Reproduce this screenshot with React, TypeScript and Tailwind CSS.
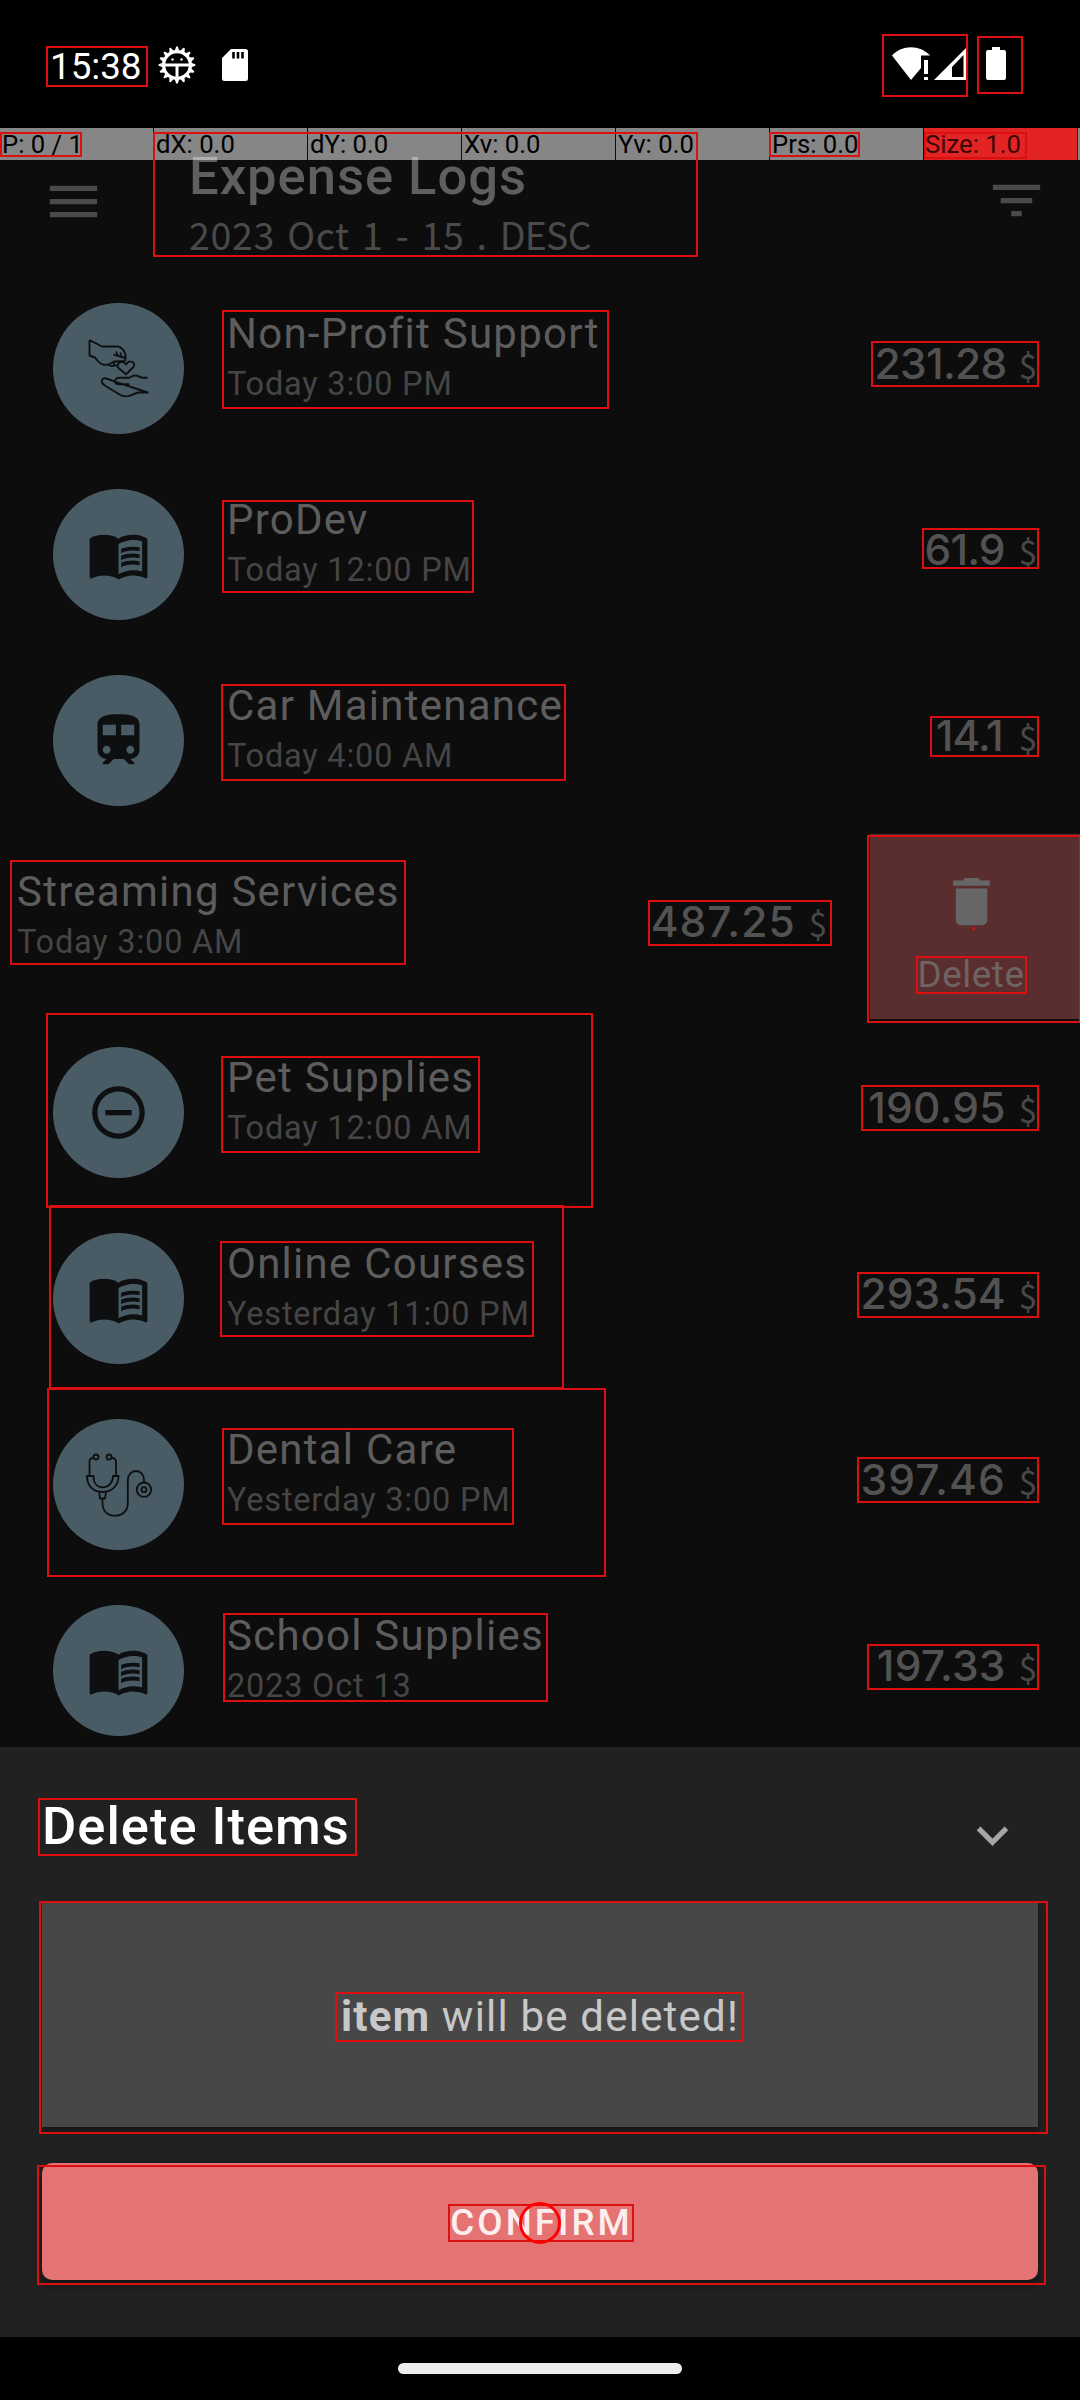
import type { ReactNode } from "react";
import {
  MdMenu,
  MdFilterList,
  MdMenuBook,
  MdRemoveCircleOutline,
  MdDelete,
  MdExpandMore,
} from "react-icons/md";

function DonateIcon() {
  return (
    <svg className="size-[131px]" viewBox="53 303 131 131" fill="none" stroke="currentColor" strokeWidth="1.9" strokeLinejoin="round">
      <path d="M89.500 340L102 346.500H118C121 346.500 125.500 352 125.500 355V359C125.500 362 122 361.500 119 362.500M89.500 340V355.500L95 357.500C98 361 99 364 104 364.800C109 365.500 111 363 114 361.500L125 361" />
      <path d="M125.500 358L113.300 354.700M116 351.500L117.500 355M120.700 352.500V356M108 364.500L111 366L117 365.500M113.500 362L114.500 366" />
      <path d="M126 374.300L118.500 368C115.500 364.500 121.500 358.500 126 364.500C129.500 358.500 136.500 362.500 133.500 367Z" />
      <path d="M147.700 377.700H141.700C139 376.500 138 375.500 135 375.500S131 377.700 129 377.700H119C116.500 377.700 115 379.500 115 381.500S117 384.300 119.300 384.300H129.300M115 381.700L106.500 378.500C103 377.500 101 380 102 382.500C102.800 384.300 104 384.800 106 386.300L119.500 394.500C123 396.800 126 397 130 395.700L138 392.500H147.700Z" />
    </svg>
  );
}

function StethoscopeIcon() {
  return (
    <svg className="size-[131px]" viewBox="53 1419 131 131" fill="none" stroke="currentColor" strokeWidth="1.8">
      <circle cx="96" cy="1457" r="2.500" />
      <circle cx="109" cy="1457" r="2.500" />
      <path d="M93.500 1457.500c-3 .5-4 2-4 4.500v14M111.500 1457.500c3 .5 4.500 2 4.500 4.500v14" />
      <path d="M87 1476h6.500c0 7 3.500 11.300 9 11.300s10.500-4.300 10.500-11.300h5.500c0 9-6 16-16 16s-15.500-7-15.500-16z" />
      <path d="M99.200 1492l.8 6.500h5l1-6.500M102.500 1498.500v4.500c0 8 5 12.700 12.200 12.700 8 0 13.100-5 13.100-12.700v-23c0-5 3.500-9 8.200-9s8 4 8 9v2.500" />
      <circle cx="144" cy="1489.700" r="7.200" />
      <circle cx="144" cy="1489.700" r="2.500" />
    </svg>
  );
}

function TrainIcon() {
  return (
    <svg className="size-[63px]" viewBox="0 0 24 24" fill="currentColor">
      <path d="M12 2c-4 0-8 .5-8 4v9.500C4 17.430 5.570 19 7.500 19L6 20.500v.5h2.230l2-2H14l2 2h2v-.5L16.500 19c1.930 0 3.500-1.570 3.500-3.500V6c0-3.500-3.580-4-8-4zM7.500 17c-.83 0-1.500-.67-1.500-1.500S6.670 14 7.500 14s1.500.67 1.500 1.500S8.330 17 7.500 17zm3.500-7H6V6h5v4zm2 0V6h5v4h-5zm3.500 7c-.83 0-1.500-.67-1.500-1.500s.67-1.500 1.500-1.500 1.500.67 1.500 1.500-.67 1.500-1.500 1.500z" />
    </svg>
  );
}

function GearIcon() {
  const teeth = Array.from({ length: 16 }, (_, i) => i * 22.5);
  return (
    <svg className="size-[38px]" viewBox="0 0 38 38" fill="none" stroke="white">
      {teeth.map((a) => (
        <path key={a} d="M16.500 5.500L18.200.6h1.600l1.700 4.900z" fill="white" stroke="none" transform={`rotate(${a} 19 19)`} />
      ))}
      <circle cx="19" cy="19" r="13.400" strokeWidth="3.200" />
      <path d="M6 19h26M19 20v12" strokeWidth="3" />
      <circle cx="14.500" cy="13.500" r="1.200" fill="white" stroke="none" />
      <circle cx="23.500" cy="13.500" r="1.200" fill="white" stroke="none" />
    </svg>
  );
}

function StatusBar() {
  return (
    <div className="flex h-[128px] items-start bg-black pt-[46px] text-white">
      <span className="ml-[50px] w-[108px] text-[36.750px] leading-[41px]">15:38</span>
      <GearIcon />
      <svg className="ml-[26px] mt-[3px] h-8 w-[26px]" viewBox="0 0 26 32">
        <path d="M9 0h14.500a2.500 2.500 0 0 1 2.500 2.500v27a2.500 2.500 0 0 1-2.500 2.500H2.500A2.500 2.500 0 0 1 0 29.500V9z" fill="white" />
        <path d="M11.500 3v6.500M16 3v6.500M20.500 3v6.500" stroke="black" strokeWidth="2.600" />
      </svg>
      <svg className="ml-[644px] mt-px h-[33px] w-[38px]" viewBox="0 0 38 33" fill="white">
        <path d="M0 8.500C10-2.500 28-2.500 38 8.500H29V21L19 33z" />
        <path d="M32 13h4v14h-4zM32 30h4v3h-4z" />
      </svg>
      <svg className="ml-1 mt-px h-[33px] w-8" viewBox="0 0 32 33">
        <path d="M32 1v32H0z" fill="white" />
        <path d="M29.500 8v22H18V20z" fill="black" />
      </svg>
      <svg className="ml-5 mt-px h-[33px] w-5" viewBox="0 0 20 33" fill="white">
        <path d="M6 0h8v3h4a2 2 0 0 1 2 2v26a2 2 0 0 1-2 2H2a2 2 0 0 1-2-2V5a2 2 0 0 1 2-2h4z" />
      </svg>
    </div>
  );
}

type Expense = {
  title: string;
  date: string;
  amount: string;
  icon: ReactNode;
  spacing: string;
};

const book = <MdMenuBook className="size-[63px]" />;

const before: Expense[] = [
  { title: "Non-Profit Support", date: "Today 3:00 PM", amount: "231.28", icon: <DonateIcon />, spacing: "tracking-[-0.7px] mr-[-1px]" },
  { title: "ProDev", date: "Today 12:00 PM", amount: "61.9", icon: book, spacing: "tracking-[-0.9px] mr-px" },
  { title: "Car Maintenance", date: "Today 4:00 AM", amount: "14.1", icon: <TrainIcon />, spacing: "tracking-[-1px] mr-[3px]" },
];

const after: Expense[] = [
  { title: "Pet Supplies", date: "Today 12:00 AM", amount: "190.95", icon: <MdRemoveCircleOutline className="size-[63px]" />, spacing: "tracking-[0.2px]" },
  { title: "Online Courses", date: "Yesterday 11:00 PM", amount: "293.54", icon: book, spacing: "tracking-[0px]" },
  { title: "Dental Care", date: "Yesterday 3:00 PM", amount: "397.46", icon: <StethoscopeIcon />, spacing: "tracking-[1px]" },
  { title: "School Supplies", date: "2023 Oct 13", amount: "197.33", icon: book, spacing: "tracking-[0.2px]" },
];

function Labels({ title, date }: { title: string; date: string }) {
  return (
    <div className="flex-1 pt-[33px] whitespace-nowrap">
      <div className="text-[42px] leading-[50px] tracking-[1.25px] text-[#5d5d5d]">{title}</div>
      <div className="mt-[3px] text-[32.500px] leading-[44px] tracking-[0.8px] text-[#454545]">{date}</div>
    </div>
  );
}

function Amount({ value, spacing }: { value: string; spacing: string }) {
  return (
    <div className="flex items-baseline pt-[62px] font-['Inter',sans-serif] leading-[52px] text-[#525252]">
      <span className={`text-[42.500px] font-medium ${spacing}`}>{value}</span>
      <span className="ml-[13px] font-['Noto_Sans_CJK_SC',sans-serif] text-[33px] leading-[40px] text-[#484848]">$</span>
    </div>
  );
}

function Row({ item }: { item: Expense }) {
  return (
    <div className="flex h-[186px] shrink-0 items-start pl-[53px] pr-[43px]">
      <div className="mr-[43px] mt-[27px] flex size-[131px] items-center justify-center rounded-full bg-[#495c65] text-[#0d0f10]">
        {item.icon}
      </div>
      <Labels title={item.title} date={item.date} />
      <Amount value={item.amount} spacing={item.spacing} />
    </div>
  );
}

const boxes: [number, number, number, number][] = [
  [46, 46, 148, 87],
  [882, 34, 968, 97],
  [977, 36, 1023, 94],
  [0, 132, 82, 157],
  [153, 132, 698, 257],
  [769, 132, 860, 157],
  [924, 132, 1027, 159],
  [222, 310, 609, 409],
  [222, 500, 474, 593],
  [221, 684, 566, 781],
  [10, 860, 406, 965],
  [648, 900, 832, 946],
  [867, 835, 1081, 1023],
  [916, 956, 1027, 994],
  [46, 1013, 593, 1208],
  [221, 1056, 480, 1153],
  [49, 1205, 564, 1389],
  [220, 1241, 534, 1337],
  [47, 1388, 606, 1577],
  [222, 1428, 514, 1525],
  [223, 1613, 548, 1702],
  [871, 341, 1039, 387],
  [922, 528, 1039, 569],
  [930, 716, 1039, 757],
  [861, 1085, 1039, 1131],
  [857, 1272, 1039, 1318],
  [857, 1457, 1039, 1503],
  [867, 1644, 1039, 1690],
  [38, 1798, 357, 1856],
  [39, 1901, 1048, 2134],
  [335, 1992, 744, 2042],
  [37, 2165, 1046, 2285],
  [448, 2204, 634, 2242],
];

const pointerCells = ["P: 0 / 1", "dX: 0.0", "dY: 0.0", "Xv: 0.0", "Yv: 0.0", "Prs: 0.0"];

export default function App() {
  return (
    <div className="relative flex h-[2400px] w-[1080px] flex-col overflow-hidden bg-[#0d0d0d] font-['Roboto',sans-serif]">
      <StatusBar />

      <header className="flex h-[148px] shrink-0 items-start pl-[42px] pr-8 text-[#4a4a4a]">
        <MdMenu className="mt-[42px] size-[63px]" />
        <div className="ml-[84px] flex-1 whitespace-nowrap pt-[17px]">
          <h1 className="text-[52.500px] font-medium leading-[62px] tracking-[1px] text-[#5f5f5f]">Expense Logs</h1>
          <p className="-mt-[2px] font-['Noto_Sans_CJK_SC',sans-serif] text-[37.500px] leading-[57px] tracking-[0.7px] [word-spacing:3px]">
            2023 Oct 1 - 15 . <span className="tracking-[-0.8px]">DESC</span>
          </p>
        </div>
        <MdFilterList className="mt-[41px] size-[63px]" />
      </header>

      <main className="flex h-[1471px] shrink-0 flex-col overflow-hidden">
        {before.map((item) => (
          <Row key={item.title} item={item} />
        ))}
        <div className="flex h-[186px] shrink-0 items-start pl-[17px]">
          <Labels title="Streaming Services" date="Today 3:00 AM" />
          <Amount value="487.25" spacing="tracking-[1px]" />
          <div className="ml-[43px] flex h-[185px] w-[210px] flex-col items-center bg-[#5a2e2e] pr-[8px] pt-[36px] text-[#666]">
            <MdDelete className="size-[63px]" />
            <span className="mt-[20px] text-[36.750px] leading-[44px] tracking-[0.6px] text-[#6f6363]">Delete</span>
          </div>
        </div>
        {after.map((item) => (
          <Row key={item.title} item={item} />
        ))}
      </main>

      <section className="flex h-[590px] shrink-0 flex-col bg-[#212121] px-[42px]">
        <div className="flex h-[156px] items-start justify-between pr-[14px]">
          <h2 className="pt-[48px] text-[52.500px] font-medium leading-[62px] tracking-[1px] text-white">Delete Items</h2>
          <MdExpandMore className="mt-[57px] size-[63px] text-[#a6a6a6]" />
        </div>
        <div className="flex h-[224px] items-center justify-center bg-[#474747] text-[42px] leading-[50px] tracking-[1.2px] text-[#c8c8c8] shadow-[0_4px_6px_rgba(0,0,0,0.35)]">
          <p className="whitespace-pre pt-[4px]"><b className="font-bold">item</b> will be deleted!</p>
        </div>
        <button className="mt-[36px] flex h-[117px] items-center justify-center rounded-[10px] bg-[#e57373] pl-[3px] pt-[3px] text-[36.750px] font-medium leading-[44px] tracking-[3px] text-[#fdeeee] shadow-[0_5px_8px_rgba(0,0,0,0.45)]">
          CONFIRM
        </button>
      </section>

      <footer className="flex flex-1 justify-center bg-black pt-[26px]">
        <div className="h-[11px] w-[284px] rounded-full bg-[#ececec]" />
      </footer>

      <div className="absolute left-0 top-[128px] flex h-8 w-full gap-px whitespace-nowrap text-[25.700px] leading-8 text-black">
        {pointerCells.map((label) => (
          <span key={label} className="w-[153px] bg-white/50 pl-[2px]">{label}</span>
        ))}
        <span className="w-[153px] bg-[#e22424] pl-px text-[#3a0606]">Size: 1.0</span>
        <span className="flex-1 bg-white/50" />
      </div>

      {boxes.map(([x1, y1, x2, y2]) => (
        <div
          key={`${x1}-${y1}`}
          className="absolute border-2 border-[#dc1010]"
          style={{ left: x1, top: y1, width: x2 - x1, height: y2 - y1 }}
        />
      ))}
      <div className="absolute left-[972px] top-[927px] size-[3px] bg-[#c01818]" />
      <div className="absolute left-[519px] top-[2202px] size-[42px] rounded-full border-[3px] border-[#f00]" />
    </div>
  );
}
